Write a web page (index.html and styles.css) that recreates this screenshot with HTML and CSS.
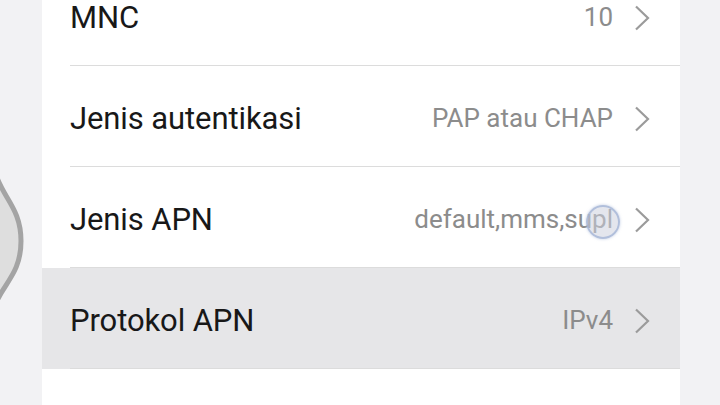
FILE: index.html
```html
<!DOCTYPE html>
<html lang="id">
<head>
<meta charset="utf-8">
<title>APN</title>
<link rel="stylesheet" href="styles.css">
</head>
<body>
<div class="screen">
  <svg class="edge-handle" width="30" height="140" viewBox="0 0 30 140">
    <path d="M-4,10 C4,34 21,44 21,76 C21,108 4,118 -4,138" fill="#dedede" stroke="#a4a4a4" stroke-width="5"/>
  </svg>
  <div class="panel">
    <div class="row">
      <span class="label">MNC</span>
      <span class="value">10</span>
      <svg class="chev" width="16" height="26" viewBox="0 0 16 26"><path d="M2,1.5 L14,13 L2,24.5" fill="none" stroke="#9b9b9b" stroke-width="2.2"/></svg>
    </div>
    <div class="row">
      <span class="label">Jenis autentikasi</span>
      <span class="value">PAP atau CHAP</span>
      <svg class="chev" width="16" height="26" viewBox="0 0 16 26"><path d="M2,1.5 L14,13 L2,24.5" fill="none" stroke="#9b9b9b" stroke-width="2.2"/></svg>
    </div>
    <div class="row">
      <span class="label">Jenis APN</span>
      <span class="value">default,mms,supl<span class="touch"></span></span>
      <svg class="chev" width="16" height="26" viewBox="0 0 16 26"><path d="M2,1.5 L14,13 L2,24.5" fill="none" stroke="#9b9b9b" stroke-width="2.2"/></svg>
    </div>
    <div class="row pressed">
      <span class="label">Protokol APN</span>
      <span class="value">IPv4</span>
      <svg class="chev" width="16" height="26" viewBox="0 0 16 26"><path d="M2,1.5 L14,13 L2,24.5" fill="none" stroke="#9b9b9b" stroke-width="2.2"/></svg>
    </div>
    <div class="row blank"></div>
  </div>
</div>
</body>
</html>
```
FILE: styles.css
```css
html, body {
  margin: 0;
  padding: 0;
}
body {
  width: 720px;
  height: 405px;
  overflow: hidden;
  background: #f2f2f4;
  font-family: Roboto, "Noto Sans", sans-serif;
}
.screen {
  position: relative;
  height: 405px;
  overflow: hidden;
  display: flex;
  justify-content: center;
}
.edge-handle {
  position: absolute;
  left: 0;
  top: 165px;
}
.panel {
  width: 638px;
  margin-left: 2px;
  margin-top: -35px;
  background: #ffffff;
  display: flex;
  flex-direction: column;
}
.row {
  box-sizing: border-box;
  height: 101px;
  flex: none;
  display: flex;
  align-items: center;
  padding: 4px 30px 0 28px;
  position: relative;
  border-bottom: 1px solid transparent;
}
.row::after {
  content: "";
  position: absolute;
  left: 28px;
  right: 0;
  bottom: -1px;
  height: 1px;
  background: #dcdcdc;
}
.row.pressed {
  background: #e6e6e8;
}
.label {
  flex: 1;
  font-size: 31px;
  color: #181818;
  letter-spacing: -0.1px;
}
.value {
  font-size: 26px;
  color: #8c8c8c;
  margin-right: 21px;
  position: relative;
}
.chev {
  display: block;
  margin-top: 2px;
}
.touch {
  position: absolute;
  right: -7px;
  top: 50%;
  width: 30px;
  height: 30px;
  margin-top: -14px;
  border-radius: 50%;
  background: rgba(205, 210, 222, 0.55);
  border: 2px solid rgba(160, 178, 214, 0.75);
  box-shadow: 0 0 3px rgba(150, 170, 210, 0.6);
}
```
